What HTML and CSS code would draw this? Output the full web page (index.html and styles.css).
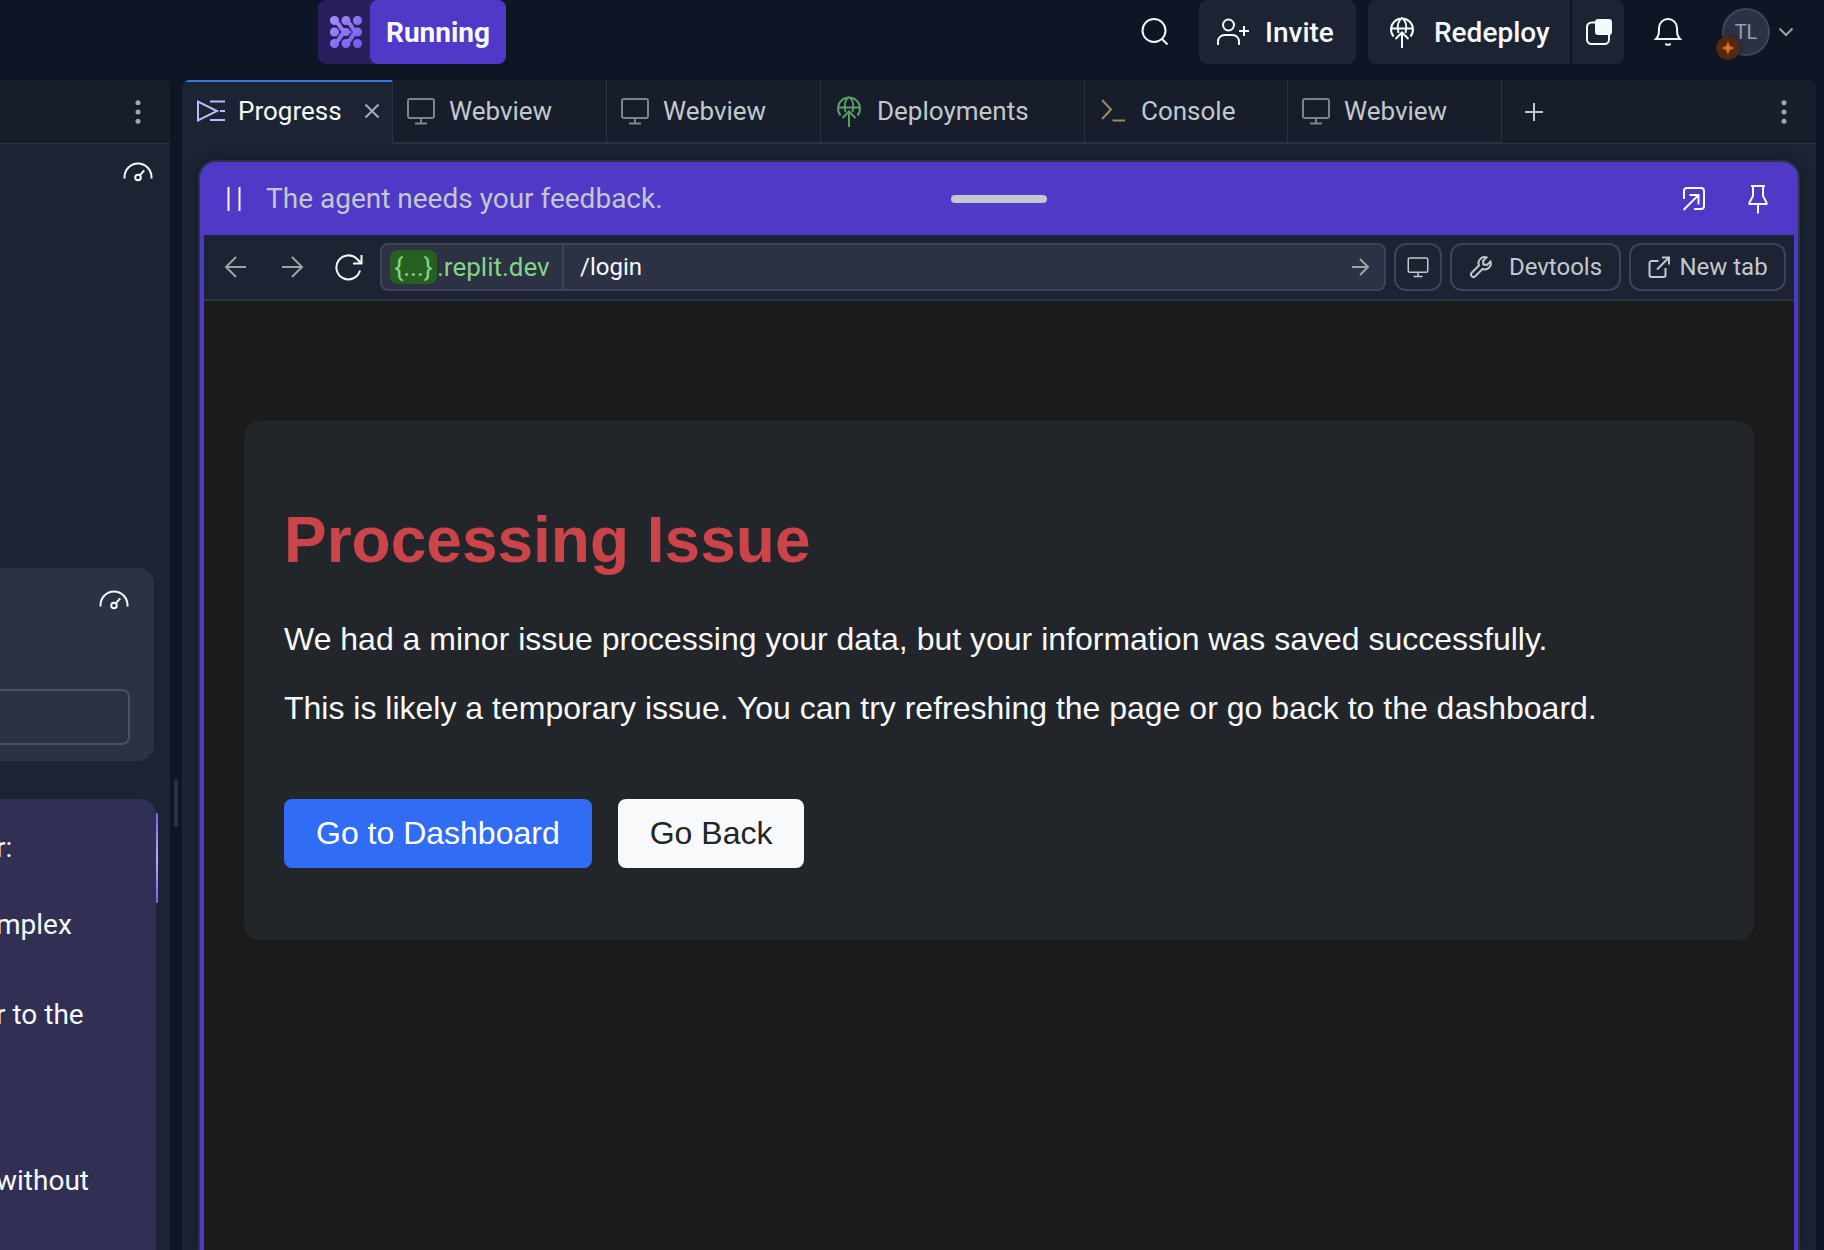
FILE: index.html
```html
<!DOCTYPE html>
<html lang="en">
<head>
<meta charset="utf-8">
<title>Workspace</title>
<link rel="stylesheet" href="styles.css">
</head>
<body>
<svg class="defs" aria-hidden="true">
  <defs>
    <linearGradient id="logo-fill" gradientUnits="userSpaceOnUse" x1="0" y1="0" x2="32" y2="32">
      <stop offset="0" stop-color="#a78ffc"/><stop offset="1" stop-color="#6f57f0"/>
    </linearGradient>
    <symbol id="i-monitor" viewBox="0 0 32 32"><rect x="3" y="4" width="26" height="19" rx="2"/><path d="M16 23v5M10 28.500h12"/></symbol>
    <symbol id="i-deploy" viewBox="0 0 32 32"><path d="M7.500 20.500A11 11 0 1 1 24.500 20.500M5 12.500h22M12.500 17C10.500 10 12.500 4.500 16 2c3.500 2.500 5.500 8 3.500 15M16 32V16.500M9.500 23l6.500-6.500 6.500 6.500"/></symbol>
    <symbol id="i-dots" viewBox="0 0 32 32"><circle cx="16" cy="6.700" r="2.500"/><circle cx="16" cy="16" r="2.500"/><circle cx="16" cy="25.300" r="2.500"/></symbol>
    <symbol id="i-gauge" viewBox="0 0 32 32"><path d="M2.500 22.500V21a13.500 13.500 0 0 1 27 0v1.500M18.200 18.800l4-4.500"/><circle cx="16" cy="21.500" r="2.800"/></symbol>
  </defs>
</svg>

<header class="topbar">
  <div class="run">
    <svg class="icon run-logo" viewBox="0 0 32 32">
      <g fill="url(#logo-fill)">
        <circle cx="4.500" cy="4.500" r="4.500"/><circle cx="16" cy="4.500" r="4.500"/><circle cx="27.500" cy="4.500" r="4.500"/>
        <circle cx="4.500" cy="16" r="4.500"/><circle cx="16" cy="16" r="4"/><circle cx="27.500" cy="16" r="4.500"/>
        <circle cx="4.500" cy="27.500" r="4.500"/><circle cx="16" cy="27.500" r="4.500"/><circle cx="27.500" cy="27.500" r="4.500"/>
      </g>
      <g fill="none" stroke="url(#logo-fill)" stroke-width="4">
        <path d="M5 6C11 7 9 14 16 16C9 18 11 25 5 26"/>
        <path d="M16.500 6C22.500 7 20.500 14 27.500 16C20.500 18 22.500 25 16.500 26"/>
      </g>
    </svg>
    <button class="run-button" type="button">Running</button>
  </div>
  <div class="actions">
    <button class="plain" type="button" aria-label="Search"><svg class="icon" viewBox="0 0 32 32"><circle cx="15" cy="14.500" r="11.500"/><path d="M23 23l5.500 5.500"/></svg></button>
    <button class="pill pill-invite" type="button"><svg class="icon" viewBox="0 0 32 32"><circle cx="11.500" cy="9" r="5.500"/><path d="M1 29v-3.500a6.500 6.500 0 0 1 6.500-6.500h8a6.500 6.500 0 0 1 6.500 6.500V29M27 10v10M22 15h10"/></svg>Invite</button>
    <div class="split">
      <button class="pill pill-left" type="button"><svg class="icon"><use href="#i-deploy"/></svg>Redeploy</button>
      <button class="pill pill-right" type="button" aria-label="Deployment pane"><svg class="icon" viewBox="0 0 32 32"><path d="M14 6.500H9.500a4.500 4.500 0 0 0-4.500 4.500v12.500a4.500 4.500 0 0 0 4.500 4.500h13a4.500 4.500 0 0 0 4.500-4.500V18"/><rect class="solid" x="13" y="3" width="17" height="16" rx="3"/></svg></button>
    </div>
    <button class="plain bell" type="button" aria-label="Notifications"><svg class="icon" viewBox="0 0 32 32"><path d="M4 23c3-3 3-6 3-11a9 9 0 0 1 18 0c0 5 0 8 3 11zM13.500 27.500c1 1.800 4 1.800 5 0"/></svg></button>
    <button class="account" type="button">
      <span class="avatar">TL<svg class="badge" viewBox="0 0 24 24"><circle cx="12" cy="12" r="12" fill="#52290e"/><path d="M12 4c.6 5.500 2 7.200 8 8c-6 .8-7.400 2.500-8 8c-.6-5.500-2-7.200-8-8c6-.8 7.400-2.500 8-8z" fill="#e8692c"/></svg></span>
      <svg class="chevron" viewBox="0 0 16 16"><path d="M1.500 4.500L8 11l6.500-6.500"/></svg>
    </button>
  </div>
</header>

<main class="workspace">
  <aside class="side">
    <div class="side-head"><button class="plain" type="button" aria-label="Pane menu"><svg class="icon dots"><use href="#i-dots"/></svg></button></div>
    <div class="side-meter"><svg class="icon gauge"><use href="#i-gauge"/></svg></div>
    <section class="note">
      <svg class="icon gauge"><use href="#i-gauge"/></svg>
      <input class="note-input" type="text" aria-label="Reply">
    </section>
    <section class="chat">
      <div class="chat-text">
        <p>r:</p>
        <p>mplex</p>
        <p>r to the</p>
        <p>without</p>
      </div>
      <span class="chat-glow"></span>
    </section>
  </aside>
  <div class="gutter"><span class="grip"></span></div>

  <section class="pane">
    <nav class="tabs" aria-label="Open tabs">
      <div class="tab tab-active">
        <button class="tab-button" type="button"><svg class="icon lilac" viewBox="0 0 32 32"><path d="M4 6.500v19L23 16zM16 6.500h15M26 16h5M16 25h15"/></svg>Progress</button>
        <button class="tab-close" type="button" aria-label="Close tab"><svg viewBox="0 0 16 16"><path d="M1.500 1.500l13 13M14.500 1.500l-13 13"/></svg></button>
      </div>
      <div class="tab tab-web"><button class="tab-button" type="button"><svg class="icon grey"><use href="#i-monitor"/></svg>Webview</button></div>
      <div class="tab tab-web"><button class="tab-button" type="button"><svg class="icon grey"><use href="#i-monitor"/></svg>Webview</button></div>
      <div class="tab tab-deploy"><button class="tab-button" type="button"><svg class="icon green"><use href="#i-deploy"/></svg>Deployments</button></div>
      <div class="tab tab-console"><button class="tab-button" type="button"><svg class="icon gold" viewBox="0 0 32 32"><path d="M5 5l9 9.500L5 24M15.500 25.500H28"/></svg>Console</button></div>
      <div class="tab tab-web"><button class="tab-button" type="button"><svg class="icon grey"><use href="#i-monitor"/></svg>Webview</button></div>
      <div class="tabs-rest">
        <button class="plain" type="button" aria-label="New tab"><svg class="icon" viewBox="0 0 32 32"><path d="M16 7v18M7 16h18"/></svg></button>
        <button class="plain" type="button" aria-label="Pane menu"><svg class="icon dots"><use href="#i-dots"/></svg></button>
      </div>
    </nav>

    <div class="agent">
      <div class="agent-head">
        <div class="agent-status">
          <svg class="icon" viewBox="0 0 32 32"><path d="M10.500 4v24M21.500 4v24"/></svg>
          <span>The agent needs your feedback.</span>
        </div>
        <span class="drag"></span>
        <div class="agent-tools">
          <button class="plain" type="button" aria-label="Pop out"><svg class="icon" viewBox="0 0 32 32"><path d="M6 16V8a3 3 0 0 1 3-3h14a3 3 0 0 1 3 3v15a3 3 0 0 1-3 3h-7M5.500 27L20 12.500M11.500 12H20.500v9.500"/></svg></button>
          <button class="plain" type="button" aria-label="Pin"><svg class="icon" viewBox="0 0 32 32"><path d="M9 3h14M11 3v10l-3.500 6.500V21h17v-1.500L21 13V3M16 21v9.500"/></svg></button>
        </div>
      </div>

      <div class="browser">
        <div class="toolbar">
          <div class="nav">
            <button class="plain dim" type="button" aria-label="Back"><svg class="icon" viewBox="0 0 32 32"><path d="M26 16H6.500M16 6l-10 10 10 10"/></svg></button>
            <button class="plain dim" type="button" aria-label="Forward"><svg class="icon" viewBox="0 0 32 32"><path d="M6 16h19.500M16 6l10 10-10 10"/></svg></button>
            <button class="plain" type="button" aria-label="Reload"><svg class="icon" viewBox="0 0 32 32"><path d="M28 19.500A12 12 0 1 1 25 8l4 4M29.500 4v8.500H21"/></svg></button>
          </div>
          <div class="address">
            <span class="host"><span class="chip">{...}</span>.replit.dev</span>
            <input class="path" type="text" value="/login" aria-label="Path">
            <button class="plain dim go" type="button" aria-label="Go"><svg class="go-icon" viewBox="0 0 24 24"><path d="M4 12h15.500M12 4l8 8-8 8"/></svg></button>
          </div>
          <button class="tool tool-square" type="button" aria-label="Device size"><svg class="tool-icon"><use href="#i-monitor"/></svg></button>
          <button class="tool tool-dev" type="button"><svg class="tool-icon" viewBox="0 0 24 24"><path d="M21.500 6.500l-3.500 3.500-3.500-.500-.500-3.500 3.500-3.500a6 6 0 0 0-7.500 8L2.500 18a2.500 2.500 0 0 0 3.500 3.500l7.500-7.500a6 6 0 0 0 8-7.500z"/></svg>Devtools</button>
          <button class="tool tool-new" type="button"><svg class="tool-icon" viewBox="0 0 24 24"><path d="M18.500 13v7a2 2 0 0 1-2 2h-12a2 2 0 0 1-2-2V8a2 2 0 0 1 2-2h7M15 2.500h7v7M22 2.500L10 14.500"/></svg>New tab</button>
        </div>

        <div class="page">
          <article class="card">
            <h1>Processing Issue</h1>
            <p>We had a minor issue processing your data, but your information was saved successfully.</p>
            <p>This is likely a temporary issue. You can try refreshing the page or go back to the dashboard.</p>
            <div class="card-actions">
              <a class="btn btn-primary" href="#dashboard">Go to Dashboard</a>
              <a class="btn btn-light" href="#back">Go Back</a>
            </div>
          </article>
        </div>
      </div>
    </div>
  </section>
</main>
</body>
</html>
```

FILE: styles.css
```css
:root {
  --root: #0e1525;
  --panel: #1c2333;
  --bar: #171d2b;
  --line: #2b3245;
  --outline: #3c445c;
  --raised: #2c3144;
  --purple: #4f39c6;
  --text: #f5f9fc;
  --dim: #c2c8cc;
}

* { box-sizing: border-box; }

body {
  margin: 0;
  height: 100vh;
  display: flex;
  flex-direction: column;
  overflow: hidden;
  background: var(--root);
  color: var(--text);
  font-family: Roboto, "Noto Sans", sans-serif;
  font-size: 26px;
}

button, input { font: inherit; color: inherit; }
button { border: 0; padding: 0; background: none; cursor: pointer; white-space: nowrap; }
svg { display: block; flex: none; fill: none; stroke: currentColor; stroke-width: 2; }
.defs { position: absolute; width: 0; height: 0; }
.icon { width: 32px; height: 32px; }
.dots { fill: #a0a6ad; stroke: none; }
.solid { fill: currentColor; stroke: none; }
.plain { display: flex; align-items: center; justify-content: center; }
.dim { color: #9da2a6; }

/* Top bar */
.topbar {
  flex: none;
  height: 80px;
  display: flex;
  align-items: flex-start;
  justify-content: space-between;
  padding: 0 30px 0 318px;
  font-size: 28px;
  font-weight: 500;
}
.run { display: flex; height: 64px; border-radius: 8px; background: #291f5c; }
.run-logo { margin: 16px 8px 16px 12px; stroke: none; }
.run-button { width: 136px; border-radius: 8px; background: var(--purple); font-weight: 700; }
.actions { display: flex; align-items: center; height: 64px; }
.pill {
  height: 64px;
  display: flex;
  align-items: center;
  gap: 16px;
  border-radius: 8px;
  background: var(--panel);
}
.pill-invite { width: 157px; padding-left: 18px; margin-left: 28px; }
.split { display: flex; gap: 2px; margin: 0 28px 0 12px; }
.pill-left { width: 202px; padding-left: 18px; border-radius: 8px 0 0 8px; }
.pill-right { width: 52px; padding-left: 10px; border-radius: 0 8px 8px 0; }
.account { display: flex; align-items: center; gap: 8px; margin-left: 38px; }
.avatar {
  position: relative;
  width: 48px;
  height: 48px;
  display: grid;
  place-items: center;
  border: 2px solid var(--outline);
  border-radius: 50%;
  background: var(--line);
  color: #9da2a6;
  font-size: 20px;
  font-weight: 400;
}
.badge { position: absolute; left: -8px; bottom: -6px; width: 24px; height: 24px; stroke: none; border-radius: 50%; box-shadow: 0 2px 6px #0e1525; }
.chevron { width: 16px; height: 16px; color: #9da2a6; }

/* Left column */
.workspace { flex: 1; min-height: 0; display: flex; padding-right: 8px; }
.side { flex: none; width: 170px; display: flex; flex-direction: column; background: var(--panel); border-radius: 0 8px 0 0; overflow: hidden; }
.side-head { height: 64px; flex: none; display: flex; align-items: center; justify-content: flex-end; padding-right: 16px; background: var(--bar); border-bottom: 1px solid var(--line); }
.side-meter { flex: none; height: 424px; display: flex; justify-content: flex-end; padding: 12px 16px 0 0; }
.note {
  flex: none;
  height: 193px;
  margin-right: 16px;
  padding: 16px 24px 16px 0;
  display: flex;
  flex-direction: column;
  align-items: flex-end;
  justify-content: space-between;
  border-radius: 0 16px 16px 0;
  background: var(--raised);
}
.note-input { width: 100%; height: 56px; border: 2px solid #4b5064; border-left: 0; border-radius: 0 8px 8px 0; background: transparent; }
.chat { flex: 1; min-height: 0; display: flex; margin: 38px 12px 0 0; }
.chat-text { flex: 1; padding-top: 33px; border-radius: 0 16px 0 0; background: #312f54; font-size: 28px; line-height: 32px; white-space: nowrap; }
.chat-text p { margin: 0 0 45px -4px; }
.chat-text p:nth-child(2) { margin-bottom: 58px; }
.chat-text p:nth-child(3) { margin-bottom: 134px; }
.chat-glow { width: 2px; height: 90px; margin-top: 14px; background: linear-gradient(#7560f0, #b9acff, #7560f0); }
.gutter { flex: none; width: 12px; display: flex; align-items: center; justify-content: center; }
.grip { width: 4px; height: 48px; margin-top: 276px; border-radius: 2px; background: var(--line); }

/* Tabs */
.pane { flex: 1; min-width: 0; display: flex; flex-direction: column; background: var(--panel); border-radius: 8px 8px 0 0; overflow: hidden; }
.tabs { flex: none; height: 64px; display: flex; }
.tab { display: flex; align-items: center; padding-left: 12px; background: var(--bar); color: var(--dim); border-right: 1px solid var(--line); border-bottom: 2px solid var(--line); }
.tab-button { display: flex; align-items: center; gap: 12px; }
.tab-active { width: 211px; justify-content: space-between; padding-right: 12px; background: var(--panel); color: var(--text); border-bottom-color: var(--panel); box-shadow: inset 0 2px #3577e5; }
.tab-close svg { width: 16px; height: 16px; color: #a9aeb4; }
.tab-web { width: 214px; }
.tab-deploy { width: 264px; }
.tab-console { width: 203px; }
.tabs-rest { flex: 1; display: flex; align-items: center; justify-content: space-between; padding: 0 16px; background: var(--bar); color: var(--dim); border-bottom: 1px solid var(--line); }
.lilac { color: #c4b5fd; }
.grey { color: #7d838e; }
.green { color: #5c9a66; }
.gold { color: #9a8b5a; }

/* Agent window */
.agent {
  flex: 1;
  min-height: 0;
  margin: 16px 16px 0;
  display: flex;
  flex-direction: column;
  border: 2px solid var(--line);
  border-bottom: 0;
  border-radius: 18px 18px 0 0;
  background: var(--purple);
  box-shadow: 0 0 12px #131a28;
  overflow: hidden;
}
.agent-head { flex: none; height: 73px; display: grid; grid-template-columns: 1fr auto 1fr; align-items: center; padding: 0 18px; font-size: 28px; }
.agent-status { display: flex; align-items: center; gap: 16px; color: var(--dim); white-space: nowrap; }
.agent-status svg { color: var(--text); }
.drag { width: 96px; height: 8px; border-radius: 4px; background: var(--dim); }
.agent-tools { display: flex; justify-content: flex-end; gap: 32px; padding-right: 6px; }

/* Browser */
.browser { flex: 1; min-height: 0; margin: 0 4px; display: flex; flex-direction: column; background: #1b1b1b; }
.toolbar { flex: none; height: 66px; display: flex; align-items: center; gap: 8px; padding: 0 8px; background: var(--panel); border-bottom: 2px solid var(--line); font-size: 24px; }
.nav { display: flex; gap: 24px; padding: 0 8px; }
.address { flex: 1; height: 48px; display: flex; align-items: center; border: 2px solid var(--outline); border-radius: 8px; background: var(--raised); }
.host { flex: none; height: 100%; width: 182px; display: flex; align-items: center; padding-left: 8px; color: #83d583; border-right: 2px solid var(--outline); font-size: 26px; white-space: nowrap; }
.chip { width: 47px; height: 34px; display: grid; place-items: center; border-radius: 8px; background: #266020; line-height: 34px; }
.path { flex: 1; min-width: 0; border: 0; padding: 0 16px; background: none; outline: 0; }
.go { padding: 0 12px; }
.go-icon { width: 24px; height: 24px; }
.tool { flex: none; height: 48px; display: flex; align-items: center; justify-content: center; border: 2px solid var(--outline); border-radius: 12px; color: var(--dim); }
.tool-square { width: 48px; }
.tool-dev { width: 171px; gap: 16px; }
.tool-new { width: 157px; gap: 8px; }
.tool-icon { width: 24px; height: 24px; }

/* Previewed page */
.page { flex: 1; min-height: 0; padding: 120px 40px; font-family: "Liberation Sans", Arial, sans-serif; font-size: 32px; line-height: 37px; color: #f8f9fa; }
.card { padding: 81px 40px 72px; border-radius: 16px; background: #22262a; }
.card h1 { margin: 0 0 42px; font-size: 64px; line-height: 77px; color: #cb444a; }
.card p { margin: 0 0 32px; }
.card-actions { display: flex; gap: 26px; margin-top: 72px; }
.btn { padding: 16px 32px; border-radius: 8px; text-decoration: none; }
.btn-primary { background: #316cf4; color: #fff; }
.btn-light { background: #f8f9fa; color: #212529; }
```
